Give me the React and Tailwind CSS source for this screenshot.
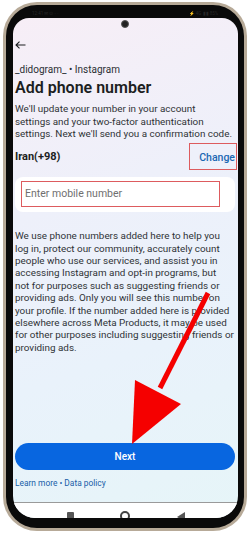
import React from "react";

const font = { fontFamily: "Roboto, 'Noto Sans', Arial, sans-serif" };

const para1 = [
  "We'll update your number in your account",
  "settings and your two-factor authentication",
  "settings. Next we'll send you a confirmation code.",
];

const para2 = [
  "We use phone numbers added here to help you",
  "log in, protect our community, accurately count",
  "people who use our services, and assist you in",
  "accessing Instagram and opt-in programs, but",
  "not for purposes such as suggesting friends or",
  "providing ads. Only you will see this number on",
  "your profile. If the number added here is provided",
  "elsewhere across Meta Products, it may be used",
  "for other purposes including suggesting friends or",
  "providing ads.",
];

export default function App() {
  return (
    <div
      className="relative w-[250px] h-[533px] bg-white pt-[2px] pl-[3px] overflow-hidden"
      style={font}
    >
      {/* phone rim */}
      <div className="w-[244px] h-[529px] rounded-[34px] bg-[#b7aa98] p-[3px]">
        {/* bezel */}
        <div className="relative w-full h-full rounded-[31px] bg-[#0a0a0a] pt-[13px] pl-[7px] pr-[6px]">
          {/* faint status bar */}
          <div className="absolute top-[6px] left-[26px] right-[26px] flex justify-between text-[4.5px] leading-[6px] text-[#262626]">
            <span>12:41 ✉ ⊙ ◦ ·</span>
            <span>⚡ 4G ▮▮ 85%</span>
          </div>
          {/* screen */}
          <div className="relative w-[225px] h-[500px] rounded-t-[16px] rounded-b-[22px] overflow-hidden bg-[linear-gradient(160deg,#f7eef6_0%,#eef0fa_35%,#e9f2fb_65%,#e6f5f8_100%)] flex flex-col">
            {/* camera */}
            <div className="absolute top-[2px] left-[108px] w-[8px] h-[8px] rounded-full bg-[#222] border-[1.5px] border-[#555]" />
            <div className="flex-1 flex flex-col pl-[2px] pr-[3px]">
              {/* back arrow */}
              <div className="mt-[23px] h-[8px] flex items-center">
                <svg width="11" height="8" viewBox="0 0 11 8" fill="none">
                  <path d="M10.5 4H1M4.5 0.6L1 4L4.5 7.4" stroke="#1c1e21" strokeWidth="1.1" />
                </svg>
              </div>
              <div className="mt-[14px] h-[13px] text-[10px] leading-[13px] text-[#2b2f33]">
                _didogram_ • Instagram
              </div>
              <div className="mt-[1px] h-[22px] text-[16px] leading-[22px] font-semibold text-[#1c1e21]">
                Add phone number
              </div>
              <div className="mt-[4px] text-[9.9px] leading-[12.7px] text-[#2f3336]">
                {para1.map((l) => (
                  <div key={l} className="whitespace-nowrap">{l}</div>
                ))}
              </div>
              <div className="mt-[2px] h-[27px] flex items-center justify-between">
                <span className="pt-[2px] text-[11px] font-bold text-[#1c1e21]">Iran(+98)</span>
                <div className="-mr-[2px] h-[27px] w-[48px] border-[1.5px] border-[#dd5b5e] flex items-center justify-end pr-[1px] pt-[2px]">
                  <span className="text-[10.5px] font-medium text-[#1b67b3]">Change</span>
                </div>
              </div>
              <div className="mt-[7px] h-[35px] rounded-[8px] bg-white pl-[6px] pt-[4px]">
                <div className="w-[199px] h-[26px] border-[1.5px] border-[#dd5b5e] flex items-center pl-[3px]">
                  <span className="text-[10.5px] text-[#6f6f70]">Enter mobile number</span>
                </div>
              </div>
              <div className="mt-[18px] text-[9.9px] leading-[12.4px] text-[#2f3336]">
                {para2.map((l) => (
                  <div key={l} className="whitespace-nowrap">{l}</div>
                ))}
              </div>
              <div className="mt-[89px] h-[27px] rounded-full bg-[#0866e0] flex items-center justify-center">
                <span className="text-[10px] font-medium text-white">Next</span>
              </div>
              <div className="mt-[8px] h-[11px] text-[8.4px] leading-[11px] text-[#1a5ea8]">
                Learn more • Data policy
              </div>
            </div>
            {/* nav bar */}
            <div className="h-[16px] border-t-[1.5px] border-[#9a9a9a] bg-white relative">
              <div className="absolute top-[9px] left-[54px] w-[7px] h-[7px] bg-[#555] rounded-[1px]" />
              <div className="absolute top-[8px] left-[107px] w-[10px] h-[10px] rounded-full border-[2px] border-[#444]" />
              <div className="absolute top-[9px] left-[164px] w-0 h-0 border-t-[5px] border-b-[5px] border-r-[8px] border-t-transparent border-b-transparent border-r-[#555]" />
            </div>
          </div>
        </div>
      </div>
      {/* red annotation arrow */}
      <svg
        className="absolute top-0 left-0 pointer-events-none"
        width="250"
        height="533"
        viewBox="0 0 250 533"
      >
        <line x1="208" y1="293" x2="160" y2="388" stroke="#f50000" strokeWidth="5" />
        <polygon points="135,380 181,404 132,444" fill="#f50000" />
      </svg>
    </div>
  );
}
